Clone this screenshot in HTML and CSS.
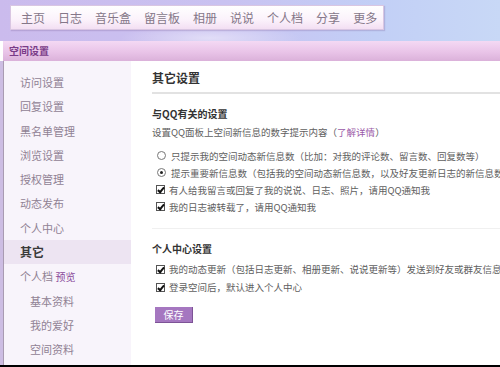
FILE: index.html
```html
<!DOCTYPE html>
<html lang="zh-CN">
<head>
  <meta charset="UTF-8">
  <title>空间设置</title>
  <link rel="stylesheet" href="styles.css">
</head>
<body>
  <div class="page">
    <div class="top">
      <ul class="nav">
        <li>主页</li>
        <li>日志</li>
        <li>音乐盒</li>
        <li>留言板</li>
        <li>相册</li>
        <li>说说</li>
        <li>个人档</li>
        <li>分享</li>
        <li>更多</li>
      </ul>
    </div>

    <div class="panel-head">空间设置</div>

    <div class="main">
      <ul class="side">
        <li>访问设置</li>
        <li>回复设置</li>
        <li>黑名单管理</li>
        <li>浏览设置</li>
        <li>授权管理</li>
        <li>动态发布</li>
        <li>个人中心</li>
        <li class="active">其它</li>
        <li>个人档 <a class="preview">预览</a></li>
        <li class="sub">基本资料</li>
        <li class="sub">我的爱好</li>
        <li class="sub">空间资料</li>
      </ul>

      <div class="content">
        <h2 class="title">其它设置</h2>

        <div class="group">
          <h3 class="group-title">与QQ有关的设置</h3>
          <p class="desc">设置QQ面板上空间新信息的数字提示内容（<a class="link">了解详情</a>）</p>
          <label class="row"><input type="radio" name="tip">只提示我的空间动态新信息数（比加：对我的评论数、留言数、回复数等）</label>
          <label class="row"><input type="radio" name="tip" checked>提示重要新信息数（包括我的空间动态新信息数，以及好友更新日志的新信息数）</label>
          <label class="row"><input type="checkbox" checked>有人给我留言或回复了我的说说、日志、照片，请用QQ通知我</label>
          <label class="row"><input type="checkbox" checked>我的日志被转载了，请用QQ通知我</label>
        </div>

        <div class="group second">
          <h3 class="group-title">个人中心设置</h3>
          <label class="row"><input type="checkbox" checked>我的动态更新（包括日志更新、相册更新、说说更新等）发送到好友或群友信息中心</label>
          <label class="row"><input type="checkbox" checked>登录空间后，默认进入个人中心</label>
          <button class="save-btn">保存</button>
        </div>
      </div>
    </div>
  </div>
</body>
</html>
```

FILE: styles.css
```css
:root {
  --nav-text: #857789;
  --side-bg: #f8f4fb;
  --side-active: #ede4f2;
  --side-text: #908294;
  --purple: #8a4a9a;
  --text: #606060;
  --cjk: "Noto Sans CJK SC", "Liberation Sans", sans-serif;
}

* {
  box-sizing: border-box;
  margin: 0;
  padding: 0;
}

html, body {
  width: 500px;
  height: 367px;
  overflow: hidden;
}

body {
  font-family: var(--cjk);
  color: var(--text);
  background: #000;
}

.page {
  height: 365px;
  display: flex;
  flex-direction: column;
  background: #ffffff;
  overflow: hidden;
}

.top {
  height: 41px;
  flex: none;
  padding: 5px 0 0 10px;
  background:
    radial-gradient(ellipse 90px 14px at 210px 38px, rgba(255, 255, 255, 0.45), transparent),
    linear-gradient(90deg, #cbbbed 0%, #c9c2f1 45%, #c2cff6 75%, #c8d8f6 100%);
}

.nav {
  list-style: none;
  display: flex;
  width: 374px;
  height: 25px;
  align-items: center;
  padding-left: 10px;
  background: linear-gradient(180deg, #ffffff 0%, #fbf2fb 60%, #f3dff3 100%);
  border: 1px solid #d9c6e2;
  box-shadow: 1px 1px 1px rgba(120, 90, 150, 0.25);
}

.nav li {
  flex: none;
  white-space: nowrap;
  font-size: 12px;
  color: var(--nav-text);
  margin-right: 13px;
  line-height: 1;
}

.panel-head {
  flex: none;
  height: 20px;
  margin-left: 3px;
  padding-left: 6px;
  font-size: 10px;
  font-weight: bold;
  line-height: 20px;
  color: #7a3c88;
  background: linear-gradient(180deg, #f4d9f4 0%, #e9c4e8 55%, #dbb1da 100%);
}

.main {
  flex: 1;
  display: flex;
  border-left: 3px solid #cdbde3;
}

.side {
  list-style: none;
  width: 128px;
  flex: none;
  padding-top: 9px;
  background: var(--side-bg);
  border-left: 1px solid #a99bb2;
}

.side li {
  height: 24.3px;
  line-height: 24.3px;
  padding-left: 16px;
  font-size: 11px;
  color: var(--side-text);
}

.side li.active {
  background: var(--side-active);
  font-size: 12px;
  font-weight: bold;
  color: #3a3a3a;
}

.side li.sub {
  padding-left: 26px;
}

.preview {
  font-size: 10px;
  color: var(--purple);
}

.content {
  flex: 1;
  min-width: 0;
  padding: 7px 0 0 21px;
  white-space: nowrap;
  overflow: hidden;
}

.title {
  font-size: 12px;
  font-weight: bold;
  color: #333;
  line-height: 20px;
  padding-bottom: 4px;
  border-bottom: 2px solid #e2e2e2;
}

.group {
  padding-top: 11px;
  padding-bottom: 13px;
}

.group.second {
  border-top: 1px solid #f0f0f0;
  padding-top: 11px;
}

.group-title {
  font-size: 10px;
  font-weight: bold;
  color: #333;
  line-height: 18px;
  margin-bottom: 1px;
}

.second .group-title {
  margin-bottom: 2px;
}

.desc {
  font-size: 9.5px;
  line-height: 17px;
  margin-bottom: 6px;
}

.link {
  color: #9a5aa8;
}

.row {
  display: flex;
  align-items: center;
  height: 17px;
  padding-left: 4px;
  font-size: 9.5px;
  color: var(--text);
}

.second .row {
  height: 18px;
}

.row input {
  appearance: none;
  -webkit-appearance: none;
  width: 9px;
  height: 9px;
  margin-right: 4px;
  flex: none;
  background: #fff;
  border: 1px solid #555;
  position: relative;
}

.row input[type="radio"] {
  border-radius: 50%;
  border-color: #777;
  margin-left: 1px;
  margin-right: 5px;
}

.row input[type="radio"]:checked::after {
  content: "";
  position: absolute;
  left: 2px;
  top: 2px;
  width: 3px;
  height: 3px;
  border-radius: 50%;
  background: #222;
}

.row input[type="checkbox"]:checked::after {
  content: "";
  position: absolute;
  left: 2px;
  top: 0px;
  width: 2px;
  height: 5px;
  border: solid #111;
  border-width: 0 2px 2px 0;
  transform: rotate(40deg);
}

.save-btn {
  display: block;
  margin: 11px 0 0 3px;
  width: 38px;
  height: 16px;
  border: none;
  border-right: 1px solid #7d5396;
  border-bottom: 1px solid #7d5396;
  background: #a577c0;
  color: #fff;
  font-family: var(--cjk);
  font-size: 10px;
  line-height: 15px;
}
```
